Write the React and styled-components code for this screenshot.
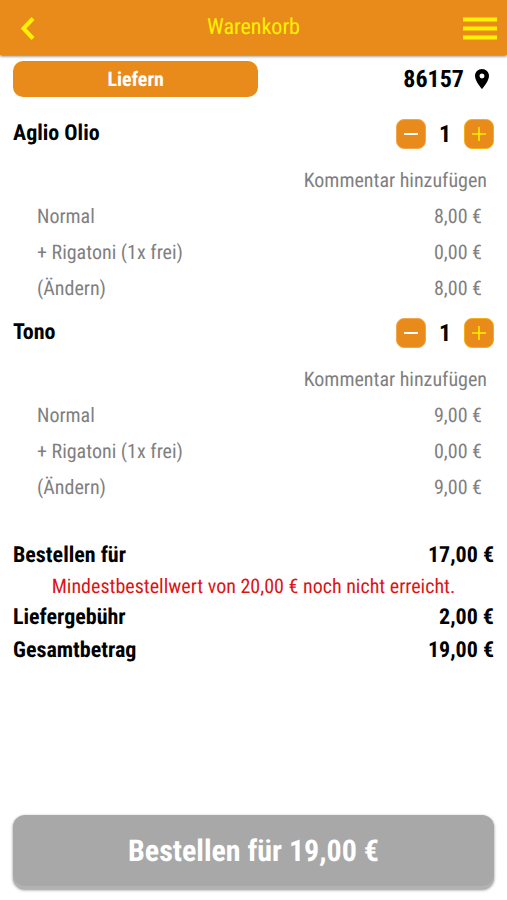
import React, { useState } from 'react'
import styled, { createGlobalStyle } from 'styled-components'

const ORANGE = '#e98b1b'
const YELLOW = '#fff200'

const GlobalStyle = createGlobalStyle`
  * {
    box-sizing: border-box;
  }

  body {
    margin: 0;
    background: #fff;
    color: #000;
    font-family: 'Roboto Condensed', Roboto, 'Liberation Sans', sans-serif;
    font-size: 20px;
    text-rendering: geometricPrecision;
  }

  button {
    margin: 0;
    padding: 0;
    border: 0;
    background: none;
    color: inherit;
    font: inherit;
    text-rendering: inherit;
    cursor: pointer;
  }
`

const Page = styled.div`
  display: flex;
  flex-direction: column;
  min-height: 100vh;
`

const Header = styled.header`
  display: grid;
  grid-template-columns: 36px 1fr 36px;
  align-items: center;
  height: 55px;
  padding: 0 9px;
  background: ${ORANGE};
  color: ${YELLOW};
  box-shadow: 0 1px 3px rgba(0, 0, 0, 0.6);
`

const Title = styled.h1`
  margin: 0;
  font-size: 22px;
  font-weight: 400;
  text-align: center;
`

const IconButton = styled.button`
  display: flex;
  justify-content: center;
`

const Content = styled.main`
  display: flex;
  flex: 1;
  flex-direction: column;
  padding: 6px 13px 11px;
`

const DeliveryBar = styled.div`
  display: flex;
  align-items: center;
  justify-content: space-between;
`

const DeliveryButton = styled.button`
  width: 51%;
  height: 36px;
  border-radius: 10px;
  background: ${ORANGE};
  color: #fff;
  font-weight: 700;
`

const ZipButton = styled.button`
  display: flex;
  align-items: center;
  gap: 6px;
  font-size: 24px;
  font-weight: 700;
`

const Items = styled.ul`
  display: flex;
  flex-direction: column;
  gap: 12px;
  margin: 22px 0 34px;
  padding: 0;
  list-style: none;
`

const ItemHead = styled.div`
  display: flex;
  align-items: center;
  justify-content: space-between;
  height: 30px;
  margin-bottom: 13px;
`

const ItemName = styled.h2`
  margin: 0;
  font-size: 22px;
  font-weight: 700;
  line-height: 26px;
`

const Stepper = styled.div`
  display: flex;
  align-items: center;
`

const StepButton = styled.button`
  display: flex;
  align-items: center;
  justify-content: center;
  width: 30px;
  height: 30px;
  border: 1px solid ${(props) => (props.$accent ? '#f3b11a' : '#f0a850')};
  border-radius: 8px;
  background: ${ORANGE};
  color: ${(props) => (props.$accent ? YELLOW : '#fff')};
`

const Count = styled.output`
  width: 38px;
  font-size: 24px;
  font-weight: 700;
  text-align: center;
`

const CommentButton = styled.button`
  display: block;
  height: 36px;
  margin-left: auto;
  padding-right: 7px;
  color: #808080;
`

const Line = styled.div`
  display: flex;
  align-items: center;
  justify-content: space-between;
  height: 36px;
  padding: 0 12px 0 24px;
  color: #808080;
`

const Summary = styled.section`
  font-size: 22px;
  font-weight: 700;
`

const SummaryRow = styled.div`
  display: flex;
  justify-content: space-between;
  line-height: 33px;
`

const Warning = styled.p`
  margin: 0;
  color: #dc1414;
  font-size: 20px;
  font-weight: 400;
  line-height: 29px;
  text-align: center;
`

const OrderButton = styled.button`
  height: 74px;
  margin-top: auto;
  padding-bottom: 2px;
  border-radius: 12px;
  background: #a8a8a8;
  color: #fff;
  font-size: 30px;
  font-weight: 700;
  box-shadow: inset 0 -3px 0 #b2b2b2, 0 1px 3px rgba(0, 0, 0, 0.45);
`

const BackIcon = () => (
  <svg width="36" height="36" viewBox="0 0 36 36" fill="none" stroke="currentColor" strokeWidth="4" aria-hidden="true">
    <path d="M24 8.5 14.5 18.5 24 28.5" />
  </svg>
)

const MenuIcon = () => (
  <svg width="36" height="36" viewBox="0 0 36 36" fill="currentColor" aria-hidden="true">
    <path d="M1 7.5h34v4H1zM1 16.5h34v4H1zM1 25.5h34v4H1z" />
  </svg>
)

const PinIcon = () => (
  <svg width="24" height="24" viewBox="0 0 24 24" fill="currentColor" aria-hidden="true">
    <path d="M12 2C8.13 2 5 5.13 5 9c0 5.25 7 13 7 13s7-7.75 7-13c0-3.87-3.13-7-7-7zm0 9.5a2.5 2.5 0 0 1 0-5 2.5 2.5 0 0 1 0 5z" />
  </svg>
)

const MinusIcon = () => (
  <svg width="14" height="14" viewBox="0 0 14 14" stroke="currentColor" strokeWidth="2" aria-hidden="true">
    <path d="M0 7h14" />
  </svg>
)

const PlusIcon = () => (
  <svg width="14" height="14" viewBox="0 0 14 14" stroke="currentColor" strokeWidth="1.5" aria-hidden="true">
    <path d="M0 7h14M7 0v14" />
  </svg>
)

const euro = (value) => value.toFixed(2).replace('.', ',') + ' €'

const DELIVERY_FEE = 2
const MINIMUM = 20

const startItems = [
  { name: 'Aglio Olio', price: 8, count: 1 },
  { name: 'Tono', price: 9, count: 1 },
]

const CartItem = ({ item, onChange }) => (
  <li>
    <ItemHead>
      <ItemName>{item.name}</ItemName>
      <Stepper>
        <StepButton aria-label="Weniger" onClick={() => onChange(-1)}><MinusIcon /></StepButton>
        <Count>{item.count}</Count>
        <StepButton $accent aria-label="Mehr" onClick={() => onChange(1)}><PlusIcon /></StepButton>
      </Stepper>
    </ItemHead>
    <CommentButton>Kommentar hinzufügen</CommentButton>
    <Line>
      <span>Normal</span>
      <span>{euro(item.price)}</span>
    </Line>
    <Line>
      <span>+ Rigatoni (1x frei)</span>
      <span>{euro(0)}</span>
    </Line>
    <Line>
      <button>(Ändern)</button>
      <span>{euro(item.price * item.count)}</span>
    </Line>
  </li>
)

const App = () => {
  const [items, setItems] = useState(startItems)

  const changeCount = (name, step) => {
    setItems(items.map((item) => (
      item.name === name ? { ...item, count: Math.max(0, item.count + step) } : item
    )))
  }

  const subtotal = items.reduce((sum, item) => sum + item.price * item.count, 0)
  const total = subtotal + DELIVERY_FEE

  return (
    <>
      <GlobalStyle />
      <Page>
        <Header>
          <IconButton aria-label="Zurück"><BackIcon /></IconButton>
          <Title>Warenkorb</Title>
          <IconButton aria-label="Menü"><MenuIcon /></IconButton>
        </Header>
        <Content>
          <DeliveryBar>
            <DeliveryButton>Liefern</DeliveryButton>
            <ZipButton>86157 <PinIcon /></ZipButton>
          </DeliveryBar>
          <Items>
            {items.map((item) => (
              <CartItem key={item.name} item={item} onChange={(step) => changeCount(item.name, step)} />
            ))}
          </Items>
          <Summary>
            <SummaryRow><span>Bestellen für</span><span>{euro(subtotal)}</span></SummaryRow>
            {subtotal < MINIMUM && (
              <Warning>Mindestbestellwert von {euro(MINIMUM)} noch nicht erreicht.</Warning>
            )}
            <SummaryRow><span>Liefergebühr</span><span>{euro(DELIVERY_FEE)}</span></SummaryRow>
            <SummaryRow><span>Gesamtbetrag</span><span>{euro(total)}</span></SummaryRow>
          </Summary>
          <OrderButton>Bestellen für {euro(total)}</OrderButton>
        </Content>
      </Page>
    </>
  )
}

export default App
